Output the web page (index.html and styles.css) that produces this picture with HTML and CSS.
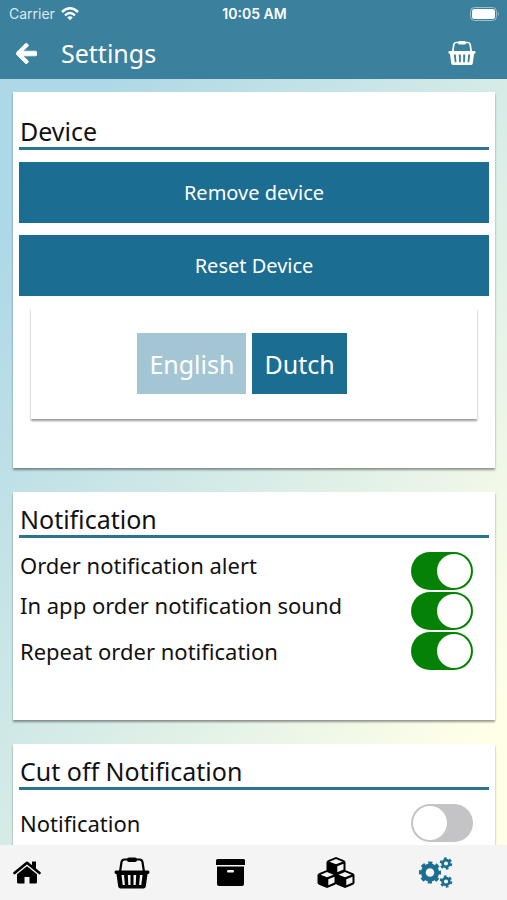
FILE: index.html
```html
<!DOCTYPE html>
<html lang="en">
<head>
<meta charset="utf-8">
<meta name="viewport" content="width=device-width, initial-scale=1">
<title>Settings</title>
<link rel="stylesheet" href="styles.css">
</head>
<body>
<svg class="defs" aria-hidden="true">
  <symbol id="basket" viewBox="0 0 36 32">
    <path d="M6 15 7.500 5Q8 2.500 10.500 2.500H25.500Q28 2.500 28.500 5L30 15" fill="none" stroke="currentColor" stroke-width="2.200"/>
    <rect x="13" y="0.500" width="10" height="4.500" rx="2" fill="currentColor"/>
    <path fill="currentColor" fill-rule="evenodd" d="M2 13.500H34Q35.500 13.500 35.500 15.200T34 17H33.500L31.800 29.500Q31.300 31.500 29.500 31.500H6.500Q4.700 31.500 4.200 29.500L2.500 17H2Q.5 17 .5 15.200T2 13.500ZM7.500 18 8.700 28H10.900L10 18ZM13.800 18 14.300 28H16.500V18ZM19.500 18V28H21.700L22.200 18ZM26 18 25.100 28H27.300L28.500 18Z"/>
  </symbol>
  <symbol id="cube" viewBox="0 0 20 18">
    <path fill="currentColor" d="M10 0 18 3.200Q19.500 4 19.500 5.500V12.500Q19.500 14 18 14.800L10 18 2 14.800Q.5 14 .5 12.500V5.500Q.5 4 2 3.200Z"/>
    <path fill="#f4f4f4" d="M10 2 16.500 4.700 10 7.300 3.500 4.700ZM11.300 9.300 17.500 6.800V12.600L11.300 15.300Z"/>
  </symbol>
</svg>
<div class="app">
  <header class="top">
    <div class="status">
      <span class="carrier">Carrier
        <svg class="wifi" viewBox="0 0 18 14" aria-hidden="true"><g fill="none" stroke="currentColor" stroke-width="2.400"><path d="M1 5Q9-2.400 17 5"/><path d="M4 8.300Q9 3.800 14 8.300"/></g><path d="M6.200 10.300Q9 8 11.800 10.300L9 13.300Z" fill="currentColor"/></svg>
      </span>
      <span class="clock">10:05 AM</span>
      <svg class="battery" viewBox="0 0 30 14" aria-hidden="true"><rect x="0.500" y="0.500" width="26" height="13" rx="4" fill="none" stroke="#9dc0ce"/><rect x="2" y="2" width="23" height="10" rx="2.500" fill="#fff"/><path d="M28 5Q30 7 28 9Z" fill="#9dc0ce"/></svg>
    </div>
    <div class="bar">
      <button class="icon-button" aria-label="Back"><svg class="back" viewBox="0 32 448 448"><path fill="currentColor" stroke="currentColor" stroke-width="16" d="M257.500 445.100l-22.200 22.200c-9.400 9.400-24.600 9.400-33.900 0L7 273c-9.400-9.400-9.400-24.600 0-33.900L201.400 44.700c9.400-9.400 24.600-9.400 33.900 0l22.200 22.200c9.500 9.500 9.300 25-.4 34.300L146.600 206H414c19 0 34 12 34 34v32c0 22-15 34-34 34H146.600l110.500 104.800c9.800 9.300 10 24.800.4 34.300z"/></svg></button>
      <h1>Settings</h1>
      <button class="icon-button" aria-label="Basket"><svg class="cart"><use href="#basket"/></svg></button>
    </div>
  </header>
  <main>
    <section class="card device">
      <h2>Device</h2>
      <button class="action">Remove device</button>
      <button class="action">Reset Device</button>
      <div class="languages">
        <button class="language inactive">English</button>
        <button class="language">Dutch</button>
      </div>
    </section>
    <section class="card notification">
      <h2>Notification</h2>
      <div class="rows">
        <label class="row"><span>Order notification alert</span><input type="checkbox" class="toggle" checked></label>
        <label class="row"><span>In app order notification sound</span><input type="checkbox" class="toggle" checked></label>
        <label class="row centered"><span>Repeat order notification</span><input type="checkbox" class="toggle" checked></label>
      </div>
    </section>
    <section class="card">
      <h2>Cut off Notification</h2>
      <div class="rows">
        <label class="row centered"><span>Notification</span><input type="checkbox" class="toggle"></label>
      </div>
    </section>
  </main>
  <nav class="tabs">
    <a href="#home" aria-label="Home"><svg class="home" viewBox="0 0 28 23"><path fill="none" stroke="currentColor" stroke-width="2.600" stroke-linecap="round" stroke-linejoin="round" d="M1.500 12 14 1.800 26.500 12"/><path fill="currentColor" d="M19 .5H23V8L19 5ZM14 5.200 24 13.200V21Q24 22.500 22.500 22.500H16.500V16H11.500V22.500H5.500Q4 22.500 4 21V13.200Z"/></svg></a>
    <a href="#orders" aria-label="Orders"><svg class="orders"><use href="#basket"/></svg></a>
    <a href="#archive" aria-label="Archive"><svg class="archive" viewBox="0 0 29 27"><path fill="currentColor" fill-rule="evenodd" d="M1.500 0H27.500Q29 0 29 1.500V6H0V1.500Q0 0 1.500 0ZM1 7.500H28V25Q28 27 26 27H3Q1 27 1 25ZM12 11Q11 11 11 12.200T12 13.400H17Q18 13.400 18 12.200T17 11Z"/></svg></a>
    <a href="#products" aria-label="Products"><svg class="products" viewBox="0 0 38 31"><use href="#cube" x="9" y="0" width="20" height="18"/><use href="#cube" x="0" y="13" width="20" height="18"/><use href="#cube" x="18" y="13" width="20" height="18"/></svg></a>
    <a href="#settings" aria-label="Settings" aria-current="page"><svg class="gears" viewBox="0 0 34 31"><g fill="none" stroke="currentColor"><circle cx="11" cy="15.500" r="6.700" stroke-width="4.800"/><circle cx="11" cy="15.500" r="9.700" stroke-width="2.800" stroke-dasharray="4.200 3.418" stroke-dashoffset="2.100"/><circle cx="27" cy="6.500" r="3.400" stroke-width="2.600"/><circle cx="27" cy="6.500" r="5.200" stroke-width="2.200" stroke-dasharray="2.600 2.845"/><circle cx="27" cy="24.500" r="3.400" stroke-width="2.600"/><circle cx="27" cy="24.500" r="5.200" stroke-width="2.200" stroke-dasharray="2.600 2.845"/></g></svg></a>
  </nav>
</div>
</body>
</html>
```
FILE: styles.css
```css
* {
  box-sizing: border-box;
}

body {
  margin: 0;
  font-family: "Noto Sans", sans-serif;
  color: #111;
}

button {
  border: 0;
  padding: 0;
  font: inherit;
  color: #fff;
  cursor: pointer;
}

svg {
  display: block;
}

.defs {
  position: absolute;
  width: 0;
  height: 0;
}

.app {
  display: flex;
  flex-direction: column;
  height: 100vh;
}

.top {
  background: #3b809d;
  color: #fff;
}

.status {
  display: grid;
  grid-template-columns: 1fr auto 1fr;
  align-items: center;
  height: 27px;
  padding: 0 7px 0 9px;
  font: 14px/20px Inter, sans-serif;
}

.carrier {
  display: flex;
  align-items: center;
  gap: 6px;
  color: #dce9ef;
}

.wifi {
  width: 18px;
  height: 14px;
  color: #fff;
}

.clock {
  font-weight: 600;
}

.battery {
  width: 30px;
  height: 14px;
  justify-self: end;
}

.bar {
  display: flex;
  align-items: center;
  height: 52px;
  padding: 0 31px 0 16px;
}

.icon-button {
  background: none;
}

.back {
  width: 21px;
  height: 21px;
}

.cart {
  width: 28px;
  height: 26px;
}

h1 {
  flex: 1;
  margin: 0 0 0 24px;
  font-size: 25px;
  line-height: 32px;
  font-weight: 400;
}

main {
  flex: 1;
  min-height: 0;
  overflow-y: auto;
  scrollbar-width: none;
  display: flex;
  flex-direction: column;
  gap: 24px;
  padding: 13px 12px 0 13px;
  background: linear-gradient(to bottom right, #add8e6 10%, #ffffe8 90%);
}

.card {
  flex: none;
  padding: 11px 6px;
  background: #fff;
  box-shadow: 0 2px 2px rgba(0, 0, 0, 0.4);
}

.device {
  padding: 23px 6px 49px;
}

.notification {
  padding-bottom: 50px;
}

h2 {
  margin: 0;
  padding-left: 1px;
  border-bottom: 3px solid #2c7391;
  font-size: 25px;
  line-height: 32px;
  font-weight: 400;
}

.action {
  display: block;
  width: 100%;
  height: 61px;
  margin-top: 12px;
  background: #1b6d91;
  font-size: 20px;
}

.languages {
  display: flex;
  justify-content: center;
  gap: 6px;
  margin: 12px 12px 0;
  padding: 25px 24px 25px 0;
  background: #fff;
  box-shadow: 0 2px 2px rgba(0, 0, 0, 0.4);
}

.language {
  height: 61px;
  padding: 0 12px;
  background: #1b6d91;
  font-size: 25px;
}

.language.inactive {
  background: #a4c5d3;
}

.rows {
  display: grid;
  gap: 2px;
  padding: 14px 16px 0 1px;
}

.row {
  display: flex;
  justify-content: space-between;
  font-size: 22px;
  line-height: 26px;
}

.centered {
  align-items: center;
}

.toggle {
  appearance: none;
  flex: none;
  width: 62px;
  height: 38px;
  margin: 0;
  padding: 2px;
  border-radius: 19px;
  background: #c4c4c6;
}

.toggle::before {
  content: "";
  display: block;
  width: 34px;
  height: 34px;
  border-radius: 50%;
  background: #fff;
}

.toggle:checked {
  background: #058205;
}

.toggle:checked::before {
  margin-left: auto;
}

.tabs {
  display: grid;
  grid-template-columns: repeat(5, 1fr);
  height: 55px;
  background: #f4f4f4;
}

.tabs a {
  display: flex;
  align-items: center;
  padding-left: 13px;
  color: #000;
}

.tabs a[aria-current] {
  color: #1b6d91;
}

.home {
  width: 28px;
  height: 23px;
}

.orders {
  width: 36px;
  height: 32px;
}

.archive {
  width: 29px;
  height: 27px;
}

.products {
  width: 38px;
  height: 31px;
}

.gears {
  width: 34px;
  height: 31px;
}
```
